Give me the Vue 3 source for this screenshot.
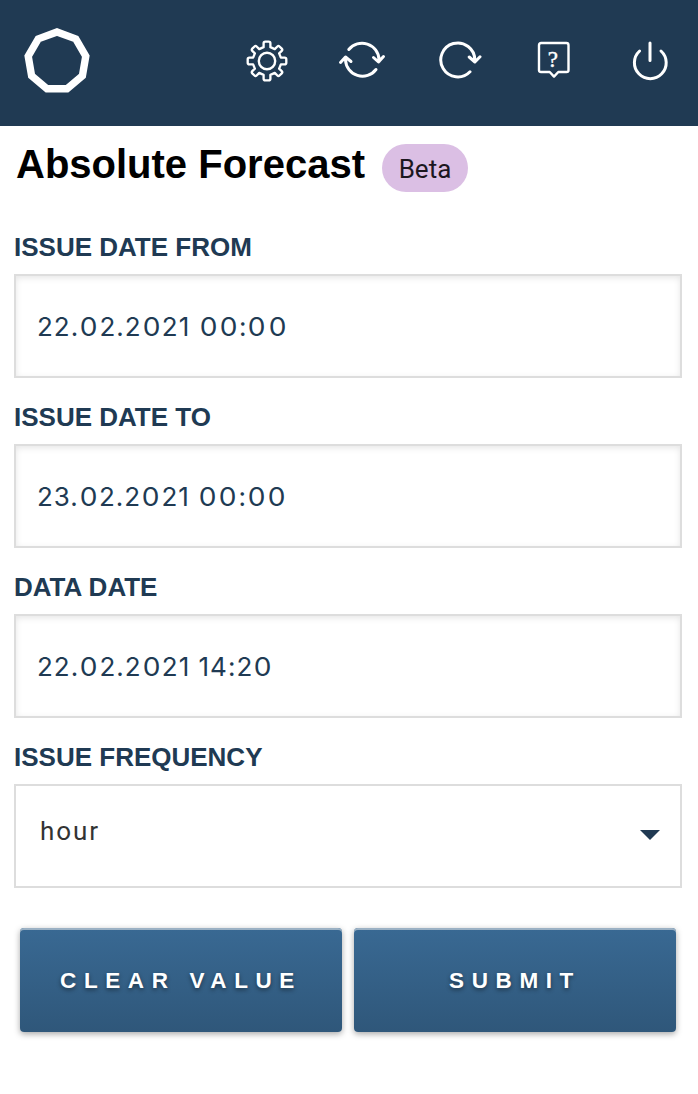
<script setup>
const fields = [
  { label: 'ISSUE DATE FROM', value: '22.02.2021 00:00' },
  { label: 'ISSUE DATE TO', value: '23.02.2021 00:00' },
  { label: 'DATA DATE', value: '22.02.2021 14:20' },
]

// Zeros are set a little wider than the other digits, so they are split out.
const runs = (value) => value.split(/(0)/).filter((part) => part !== '')
</script>

<template>
  <div class="page">
    <header class="bar">
      <svg class="logo" width="68" height="68" viewBox="0 0 68 68">
        <polygon points="34,5 52.8,11.9 62.8,29.2 59.4,48.9 44,61.8 24,61.8 8.6,48.9 5.2,29.2 15.2,11.9" />
      </svg>
      <nav class="tools">
        <svg width="44" height="44" viewBox="0 0 44 44" class="thin">
          <path d="M18.5 7.7V3.8Q18.5 2.1 20.2 2.1H23.8Q25.5 2.1 25.5 3.8V7.7L30 9.7L32.7 7Q33.8 5.9 34.9 7L37.2 9.3Q38.3 10.4 37.2 11.5L34.5 14.1L36.3 18.5H40.2Q41.9 18.5 41.9 20.2V23.8Q41.9 25.5 40.2 25.5H36.3L34.5 29.9L37.2 32.5Q38.3 33.6 37.2 34.7L34.9 37Q33.8 38.1 32.7 37L30 34.3L25.5 36.3V40.2Q25.5 41.9 23.8 41.9H20.2Q18.5 41.9 18.5 40.2V36.3L14 34.3L11.3 37Q10.2 38.1 9.1 37L6.8 34.7Q5.7 33.6 6.8 32.5L9.5 29.9L7.7 25.5H3.8Q2.1 25.5 2.1 23.8V20.2Q2.1 18.5 3.8 18.5H7.7L9.5 14.1L6.8 11.5Q5.7 10.4 6.8 9.3L9.1 7Q10.2 5.9 11.3 7L14 9.7Z" transform="translate(22 22) scale(.97) translate(-22 -22)" />
          <circle cx="22" cy="22" r="8.2" />
        </svg>
        <svg width="48" height="44" viewBox="0 0 48 44">
          <path d="M10.8 10.5A17 17 0 0 1 41 20.5V22.5M35.5 18.5L40.5 23L45.5 17.5M38 30.5A17 17 0 0 1 7.5 21V19M2.5 23.5L7.5 18L13 22.5" />
        </svg>
        <svg width="44" height="44" viewBox="0 0 44 44">
          <path d="M32 32.8A17 17 0 1 1 36.8 21V22.5M31.2 18L36.9 23L42 17.8" />
        </svg>
        <svg width="34" height="40" viewBox="0 0 34 40" class="thin">
          <path d="M4.2 4H29.3Q31.5 4 31.5 6.2V31.3Q31.5 33 29.5 33H21.3L17 37.6L12.7 33H4Q2 33 2 31.3V6.2Q2 4 4.2 4Z" />
          <text x="15.8" y="27.8" text-anchor="middle" class="question">?</text>
        </svg>
        <svg width="40" height="44" viewBox="0 0 40 44">
          <path d="M20 4V21.5M9.6 12A15.9 15.9 0 1 0 31 12" />
        </svg>
      </nav>
    </header>

    <main class="content">
      <div class="heading">
        <h1>Absolute Forecast</h1>
        <span class="badge">Beta</span>
      </div>

      <div v-for="field in fields" :key="field.label" class="field">
        <label>{{ field.label }}</label>
        <div class="box date"><span v-for="(run, i) in runs(field.value)" :key="i" :class="{ zero: run === '0' }">{{ run }}</span></div>
      </div>
      <div class="field">
        <label>ISSUE FREQUENCY</label>
        <div class="box select">
          <span>hour</span>
          <svg width="20" height="10" viewBox="0 0 20 10"><path d="M0 0H20L10 10Z" /></svg>
        </div>
      </div>

      <div class="actions">
        <button type="button">CLEAR VALUE</button>
        <button type="button">SUBMIT</button>
      </div>
    </main>
  </div>
</template>

<style>
body { background: #fff; }
</style>

<style scoped>
.page {
  box-sizing: border-box;
  width: 698px;
  height: 1094px;
  overflow: hidden;
  font-family: "Liberation Sans", Arial, sans-serif;
}
.page * { box-sizing: border-box; }
.bar {
  height: 126px;
  display: flex;
  justify-content: space-between;
  align-items: flex-start;
  padding: 27px 28px 0 23px;
  background: #203a53;
}
.bar svg {
  fill: none;
  stroke: #fff;
  stroke-width: 3;
  stroke-linecap: round;
  stroke-linejoin: round;
  flex: none;
}
.bar .logo {
  stroke-width: 7.4;
  stroke-linejoin: miter;
}
.bar .thin { stroke-width: 2.4; }
.tools {
  display: flex;
  width: 425px;
  height: 44px;
  margin-top: 12px;
}
.tools svg:nth-child(2) { margin-left: 49px; }
.tools svg:nth-child(3) { margin-left: 52px; }
.tools svg:nth-child(4) { margin-left: 55px; }
.tools svg:nth-child(5) { margin-left: 59px; }
.question {
  fill: #fff;
  stroke: #fff;
  stroke-width: 0.4px;
  font: 23px "Liberation Serif", serif;
}
.content { padding: 18px 16px 0 14px; }
.heading {
  display: flex;
  height: 82px;
  padding-left: 2px;
  gap: 17px;
}
h1 {
  margin: 0;
  font-size: 40px;
  line-height: 40px;
  font-weight: 700;
  color: #000;
  white-space: nowrap;
}
.badge {
  width: 86px;
  height: 48px;
  border-radius: 24px;
  background: #dbbfe4;
  color: #1c1720;
  font: 26px/50px Roboto, sans-serif;
  text-align: center;
}
.field { height: 170px; }
label {
  display: block;
  height: 48px;
  padding-top: 5px;
  font-size: 26px;
  line-height: 32px;
  font-weight: 700;
  color: #203a53;
}
.box {
  height: 104px;
  border: 2px solid #ddd;
  background: #fff;
}
.date {
  padding-left: 21px;
  color: #203a53;
  font: 26px/101px Inter, sans-serif;
  letter-spacing: 1px;
  white-space: pre;
  box-shadow: inset 0 2px 6px rgba(0, 0, 0, 0.1);
}
.zero {
  display: inline-block;
  padding: 0 1.4px;
  transform: scaleX(1.08);
}
.select {
  display: flex;
  justify-content: space-between;
  padding: 0 20px 0 24px;
  color: #333;
  font: 26px/91px Roboto, sans-serif;
  letter-spacing: 1.9px;
}
.select svg {
  margin-top: 44px;
  fill: #203a53;
}
.actions {
  display: grid;
  grid-template-columns: 322px 322px;
  gap: 12px;
  padding: 22px 0 0 6px;
}
button {
  height: 104px;
  padding: 0;
  border: 0;
  border-radius: 4px;
  color: #fff;
  background: linear-gradient(#396993, #2f577a);
  box-shadow: 0 2px 6px rgba(0, 0, 0, 0.35), inset 0 2px 0 #9bb1c4;
  font: 700 22.5px/106px "Liberation Sans", Arial, sans-serif;
  letter-spacing: 7.6px;
  text-shadow: 0 2px 4px rgba(0, 0, 0, 0.45);
}
</style>
